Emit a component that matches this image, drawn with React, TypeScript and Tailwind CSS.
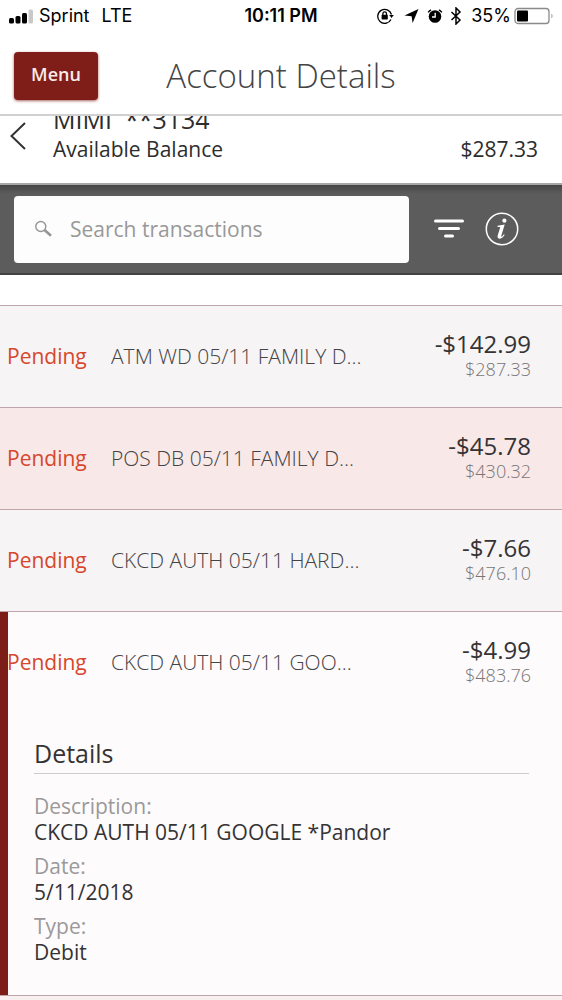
import React, { useState } from 'react';

interface Transaction {
  id: number;
  status: string;
  label: string;
  amount: string;
  balance: string;
  description: string;
  date: string;
  type: string;
}

const transactions: Transaction[] = [
  { id: 1, status: 'Pending', label: 'ATM WD 05/11 FAMILY D...', amount: '-$142.99', balance: '$287.33', description: 'ATM WD 05/11 FAMILY D', date: '5/11/2018', type: 'Debit' },
  { id: 2, status: 'Pending', label: 'POS DB 05/11 FAMILY D...', amount: '-$45.78', balance: '$430.32', description: 'POS DB 05/11 FAMILY D', date: '5/11/2018', type: 'Debit' },
  { id: 3, status: 'Pending', label: 'CKCD AUTH 05/11 HARD...', amount: '-$7.66', balance: '$476.10', description: 'CKCD AUTH 05/11 HARD', date: '5/11/2018', type: 'Debit' },
  { id: 4, status: 'Pending', label: 'CKCD AUTH 05/11 GOO...', amount: '-$4.99', balance: '$483.76', description: 'CKCD AUTH 05/11 GOOGLE *Pandor', date: '5/11/2018', type: 'Debit' },
];

function StatusBar() {
  return (
    <div className="grid grid-cols-[1fr_auto_1fr] items-center h-8 pl-2 pr-2 font-['Inter',sans-serif] text-[18px] leading-6 text-black">
      <div className="flex items-center gap-1.5">
        <svg width="25" height="16" viewBox="0 0 25 16" aria-hidden="true">
          <rect x="1" y="10" width="5" height="5.500" rx="1.500" />
          <rect x="7.500" y="8" width="5" height="7.500" rx="1.500" />
          <rect x="14" y="5" width="5" height="10.500" rx="1.500" />
          <rect x="20.500" y="1.500" width="4.500" height="14" rx="1.500" fill="#c9c9c9" />
        </svg>
        <span>Sprint</span>
        <span className="ml-1.5">LTE</span>
      </div>
      <span className="font-semibold">10:11 PM</span>
      <div className="flex items-center justify-end gap-1.5">
        <svg width="17" height="16" viewBox="0 0 17 16" fill="none" stroke="#000" strokeWidth="1.300" aria-hidden="true">
          <path d="M14 11.500A7 7 0 1 1 14.500 6.500" />
          <path d="M12.200 7h4.600l-2.300 3z" fill="#000" stroke="none" />
          <rect x="4.600" y="6.800" width="6.200" height="4.600" rx=".6" fill="#000" stroke="none" />
          <path d="M5.900 7V5.600a1.800 1.800 0 0 1 3.600 0V7" />
        </svg>
        <svg width="15" height="16" viewBox="0 0 15 16" className="ml-1" aria-hidden="true">
          <path d="M14.500 1 8.600 15 7.600 8.300.5 7.600z" />
        </svg>
        <svg width="16" height="16" viewBox="0 0 16 16" className="ml-0.5" aria-hidden="true">
          <circle cx="8" cy="8.500" r="6.300" />
          <path d="M1.200 4.400A8 8 0 0 1 4 1.800M14.800 4.400A8 8 0 0 0 12 1.800" stroke="#000" strokeWidth="1.500" fill="none" />
          <path d="M8.200 4.800V9H5" stroke="#fff" strokeWidth="1.300" fill="none" />
        </svg>
        <svg width="12" height="18" viewBox="0 0 12 18" fill="none" stroke="#000" strokeWidth="1.500" className="ml-px" aria-hidden="true">
          <path d="m1.500 5 8.500 8-4 4V1l4 4-8.500 8" />
        </svg>
        <div className="flex items-center gap-[3px] ml-[3px]">
          <span>35%</span>
          <svg width="40" height="18" viewBox="0 0 40 18" aria-hidden="true">
            <rect x="1" y="1.500" width="34" height="15" rx="3" fill="none" stroke="#8a8a8a" strokeWidth="1.300" />
            <rect x="3" y="3.500" width="11" height="11" rx="1" />
            <path d="M37.500 6.500q2 2.500 0 5z" fill="#8a8a8a" />
          </svg>
        </div>
      </div>
    </div>
  );
}

function SearchBar() {
  return (
    <div className="flex items-center h-[92px] pl-[14px] pr-[43px] bg-linear-to-b from-[#464646] to-[#5c5c5c] to-10% border-t-2 border-b-2 border-t-[#a8a8a8] border-b-[#434343]">
      <label className="flex flex-1 min-w-0 items-center gap-[17px] h-[67px] pl-5 rounded-sm bg-[#fdfdfd]">
        <svg width="19" height="18" viewBox="0 0 19 18" fill="none" stroke="#959595" aria-label="Search">
          <circle cx="6.800" cy="6.500" r="5" strokeWidth="1.400" />
          <path d="m10.500 10 6.500 5.700" strokeWidth="2.600" />
        </svg>
        <input
          type="text"
          placeholder="Search transactions"
          className="flex-1 min-w-0 bg-transparent text-[21px] leading-7 outline-none placeholder:text-[#989898]"
        />
      </label>
      <button type="button" aria-label="Filter" className="ml-6">
        <svg width="32" height="22" viewBox="0 0 32 22" fill="none" stroke="#fff" strokeWidth="3" strokeLinecap="round">
          <path d="M2.500 3h27M6.500 10.500h19M12.500 18h7" />
        </svg>
      </button>
      <button type="button" aria-label="Information" className="ml-5">
        <svg width="34" height="34" viewBox="0 0 34 34">
          <circle cx="17" cy="17" r="15.700" fill="none" stroke="#fff" strokeWidth="1.500" />
          <circle cx="19.400" cy="8.700" r="2.100" fill="#fff" />
          <path d="M12.600 13.800 19.700 12.600 16.300 23.800c-.3 1 .3 1.200 1 .5.600-.6 1.100-1.300 1.600-2l.8.500c-1.300 2.300-2.900 3.900-4.800 3.900-2 0-2.700-1.200-2.200-3.200l2.300-7.400c.2-.8 0-1-.8-1h-1.700z" fill="#fff" />
        </svg>
      </button>
    </div>
  );
}

function DetailField({ name, value }: { name: string; value: string }) {
  return (
    <div className="mb-2 text-[21px] leading-[26px]">
      <dt className="text-[#9b9999]">{name}:</dt>
      <dd className="text-[#353334]">{value}</dd>
    </div>
  );
}

function TransactionItem({ item, striped, open, onToggle }: { item: Transaction; striped: boolean; open: boolean; onToggle: () => void }) {
  const background = open ? 'bg-[#fdfbfc]' : striped ? 'bg-[#f8e8e8]' : 'bg-[#f6f4f5]';

  return (
    <li className={`border-t border-[#bfa5a9] ${background}`}>
      <div className={open ? 'shadow-[inset_8px_0_0_#7d1d17]' : ''}>
        <button type="button" aria-expanded={open} onClick={onToggle} className="flex items-center w-full h-[101px] pl-[7px] pr-[31px] pb-0.5 text-left">
          <span className="w-[104px] shrink-0 text-[21px] leading-7 text-[#d6472c]">{item.status}</span>
          <span className="flex-1 min-w-0 truncate text-[21px] leading-7 font-light text-[#454344]">{item.label}</span>
          <span className="flex flex-col items-end">
            <span className="text-[24px] leading-[26px] text-[#353334]">{item.amount}</span>
            <span className="text-[18px] leading-6 font-light text-[#777576]">{item.balance}</span>
          </span>
        </button>
        {open && (
          <div className="pl-[34px] pr-[33px] pt-[22px] pb-[22px]">
            <h2 className="pb-0.5 mb-[19px] border-b border-[#cfcccd] text-[25px] leading-9 text-[#353334]">Details</h2>
            <dl>
              <DetailField name="Description" value={item.description} />
              <DetailField name="Date" value={item.date} />
              <DetailField name="Type" value={item.type} />
            </dl>
          </div>
        )}
      </div>
    </li>
  );
}

export default function App() {
  const [openId, setOpenId] = useState<number | null>(4);

  return (
    <div className="flex flex-col min-h-screen bg-white font-['Open_Sans',sans-serif] text-[#2d2d2d]">
      <StatusBar />

      <header className="grid grid-cols-[1fr_auto_1fr] items-center h-[84px] px-[14px] pt-1.5 border-b-2 border-[#d0d0d0]">
        <button type="button" className="w-[84px] h-12 pb-1 rounded-sm bg-[#7f1d19] text-[18px] leading-6 font-semibold text-[#f8eaea] shadow-[0_1px_3px_#a86662]">
          Menu
        </button>
        <h1 className="text-[33px] leading-10 font-light text-[#444]">Account Details</h1>
      </header>

      <section className="flex items-end h-[67px] pr-6 overflow-hidden">
        <button type="button" aria-label="Back" className="ml-2 mb-8 mr-[25px]">
          <svg width="20" height="30" viewBox="0 0 20 30" fill="none" stroke="#333" strokeWidth="2">
            <path d="M17 2 3.500 15 17 28" />
          </svg>
        </button>
        <div className="flex-1 pb-5">
          <p className="text-[25px] leading-8">MIMI&nbsp; **3134</p>
          <p className="text-[21px] leading-7">Available Balance</p>
        </div>
        <span className="pb-5 text-[21px] leading-7">$287.33</span>
      </section>

      <SearchBar />

      <ul className="mt-[30px] border-b border-[#bfa5a9]">
        {transactions.map((item, index) => (
          <TransactionItem
            key={item.id}
            item={item}
            striped={index % 2 === 1}
            open={openId === item.id}
            onToggle={() => setOpenId(openId === item.id ? null : item.id)}
          />
        ))}
      </ul>
      <div className="flex-1 bg-[#f7eff0]" />
    </div>
  );
}
